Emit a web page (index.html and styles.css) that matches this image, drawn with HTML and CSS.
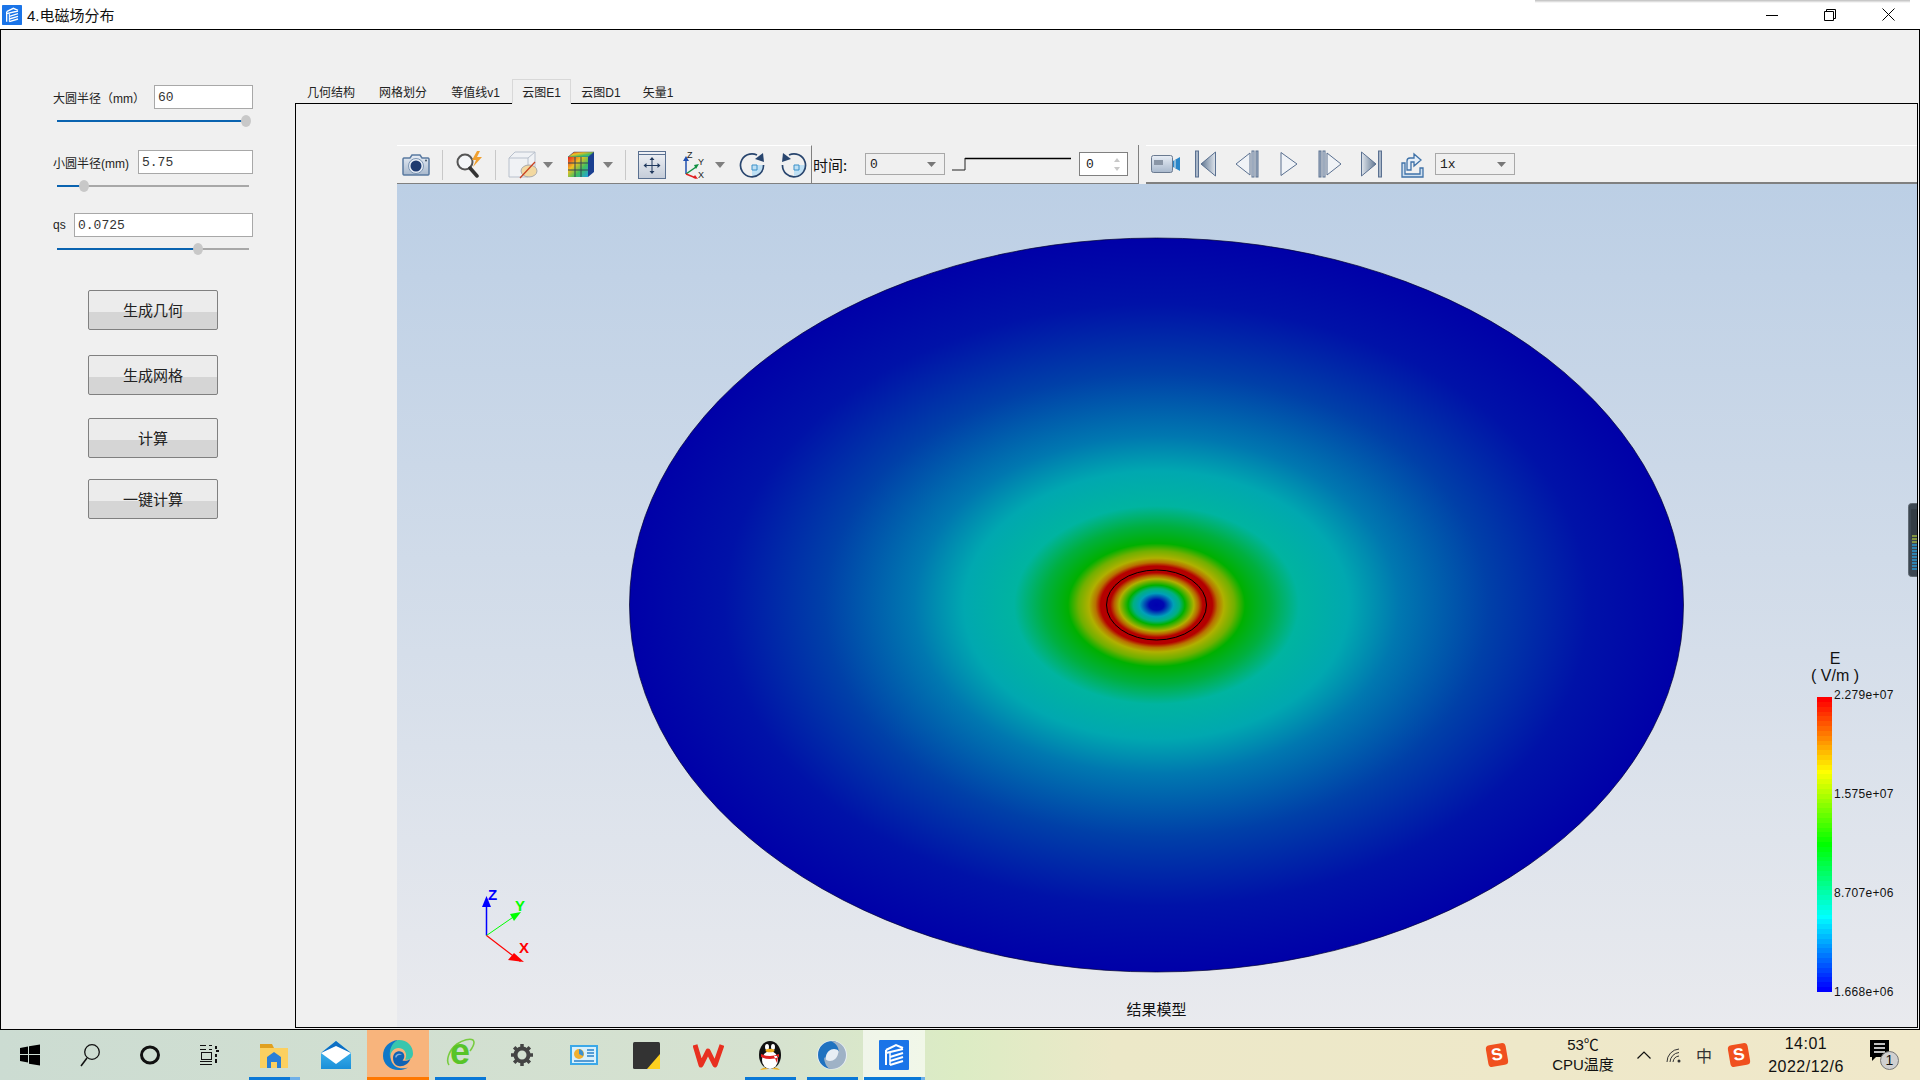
FILE: index.html
```html
<!DOCTYPE html>
<html lang="zh">
<head>
<meta charset="utf-8">
<title>4.电磁场分布</title>
<link rel="stylesheet" href="styles.css">
</head>
<body>
<svg class="defs" width="0" height="0">
  <defs>
    <symbol id="app" viewBox="0 0 30 30">
      <rect width="30" height="30" rx="1" fill="#1a74e8"/>
      <path d="M7 10 17 5l7 3M7 10v15M7 13 24 9M11 17l13-4M11 21l13-4M11 25l13-4" fill="none" stroke="#fff" stroke-width="2"/>
      <path d="M11 13v12" stroke="#fff" stroke-width="1.5"/>
    </symbol>
    <linearGradient id="steel" x1="0" y1="0" x2="0" y2="1"><stop offset="0" stop-color="#e8eef6"/><stop offset="1" stop-color="#a8b8cc"/></linearGradient>
    <linearGradient id="steelDark" x1="0" y1="0" x2="1" y2="0"><stop offset="0" stop-color="#5f7590"/><stop offset="1" stop-color="#dfe5ec"/></linearGradient>
    <linearGradient id="steelDarkR" x1="0" y1="0" x2="1" y2="0"><stop offset="0" stop-color="#dfe5ec"/><stop offset="1" stop-color="#5f7590"/></linearGradient>
    <linearGradient id="rainbow" x1="0" y1="0" x2="1" y2="1"><stop offset="0" stop-color="#e82020"/><stop offset=".35" stop-color="#f0c020"/><stop offset=".65" stop-color="#40c060"/><stop offset="1" stop-color="#20a0e0"/></linearGradient>
    <radialGradient id="field" cx=".5" cy=".5" r=".5">
      <stop offset="0" stop-color="#0000b0"/>
      <stop offset=".014" stop-color="#0008b0"/>
      <stop offset=".032" stop-color="#00a0b8"/>
      <stop offset=".044" stop-color="#00b080"/>
      <stop offset=".054" stop-color="#00b000"/>
      <stop offset=".071" stop-color="#b0b000"/>
      <stop offset=".08" stop-color="#b86000"/>
      <stop offset=".088" stop-color="#b40000"/>
      <stop offset=".106" stop-color="#b40000"/>
      <stop offset=".116" stop-color="#b87000"/>
      <stop offset=".128" stop-color="#b0b000"/>
      <stop offset=".148" stop-color="#70b000"/>
      <stop offset=".168" stop-color="#00b000"/>
      <stop offset=".215" stop-color="#00b040"/>
      <stop offset=".27" stop-color="#00b4a0"/>
      <stop offset=".365" stop-color="#00a8b0"/>
      <stop offset=".46" stop-color="#0078b0"/>
      <stop offset=".63" stop-color="#0040a8"/>
      <stop offset=".82" stop-color="#0012a8"/>
      <stop offset="1" stop-color="#0000a8"/>
    </radialGradient>
    <linearGradient id="mv" x1="0" y1="0" x2="0" y2="1"><stop offset="0" stop-color="#f0f2f6"/><stop offset="1" stop-color="#c4ccd8"/></linearGradient>
    <linearGradient id="tile" x1="0" y1="0" x2="0" y2="1"><stop offset="0" stop-color="#4fc3f7"/><stop offset="1" stop-color="#1a8fd8"/></linearGradient>
  </defs>
</svg>

<div class="screen">
  <header class="titlebar">
    <svg class="title-icon" width="20" height="20"><use href="#app"/></svg>
    <span class="title-text">4.电磁场分布</span>
    <div class="win-buttons">
      <svg width="12" height="12" viewBox="0 0 12 12"><path d="M0 6.500h12" stroke="#000"/></svg>
      <svg width="12" height="12" viewBox="0 0 12 12"><path d="M.5 2.500h9v9h-9zM2.500 2.500v-2h9v9h-2" fill="none" stroke="#000"/></svg>
      <svg width="13" height="13" viewBox="0 0 13 13"><path d="M.5.5l12 12M12.500.5l-12 12" stroke="#000"/></svg>
    </div>
  </header>

  <div class="window">
    <aside class="sidebar">
      <div class="field">
        <div class="row"><label class="lbl">大圆半径（mm）</label><div class="input w99">60</div></div>
        <div class="slider"><div class="fill v-a"></div><div class="thumb v-a"></div></div>
      </div>
      <div class="field">
        <div class="row"><label class="lbl">小圆半径(mm)</label><div class="input w115">5.75</div></div>
        <div class="slider"><div class="fill v-b"></div><div class="thumb v-b"></div></div>
      </div>
      <div class="field">
        <div class="row"><label class="lbl">qs</label><div class="input w179">0.0725</div></div>
        <div class="slider"><div class="fill v-c"></div><div class="thumb v-c"></div></div>
      </div>
      <div class="buttons">
        <button class="btn">生成几何</button>
        <button class="btn">生成网格</button>
        <button class="btn">计算</button>
        <button class="btn">一键计算</button>
      </div>
    </aside>

    <main class="main">
      <nav class="tabs">
        <span class="tab t72">几何结构</span>
        <span class="tab t72">网格划分</span>
        <span class="tab t73">等值线v1</span>
        <span class="tab t59 active">云图E1</span>
        <span class="tab t60">云图D1</span>
        <span class="tab t54">矢量1</span>
      </nav>
      <section class="pane">
        <div class="viewer">
          <div class="toolbars">
            <div class="tb tb-left">
              <svg class="ml5" width="28" height="24" viewBox="0 0 28 24"><path d="M2 5h6l2-3h8l2 3h6a1.500 1.500 0 0 1 1 1v15a1.500 1.500 0 0 1-1 1H2a1.500 1.500 0 0 1-1-1V6a1.500 1.500 0 0 1 1-1z" fill="url(#steel)" stroke="#5a7aa0" stroke-width="1.500"/><circle cx="14" cy="13" r="7.500" fill="#e8eef6" stroke="#7d96b4"/><circle cx="14" cy="13" r="5.500" fill="#1f3b70"/><circle cx="24" cy="7.500" r="1" fill="#456"/></svg>
              <i class="sep ml12"></i>
              <svg class="ml12" width="30" height="27" viewBox="0 0 30 27"><circle cx="10" cy="11" r="7.500" fill="#f4f6f8" stroke="#555" stroke-width="2"/><path d="M15 17l7 8" stroke="#333" stroke-width="3.500" stroke-linecap="round"/><path d="M22 0l-5 9h4l-3 7 9-10h-5l3-6z" fill="#f0a030"/></svg>
              <i class="sep ml10"></i>
              <svg class="ml12" width="30" height="28" viewBox="0 0 30 28"><path d="M1 7l6-6h20v17l-7 8H1z" fill="#f0f2f5" stroke="#b8c0cc"/><path d="M1 7h19v19M20 7l7-6" fill="none" stroke="#b8c0cc"/><ellipse cx="21" cy="20" rx="8" ry="6" fill="#f2d8a0" stroke="#aaa"/><path d="M12 27L27 11" stroke="#c84020" stroke-width="1.200"/></svg>
              <svg class="ml5 arrow" width="10" height="6" viewBox="0 0 10 6"><path d="M0 0h10L5 6z" fill="#7f7f7f"/></svg>
              <svg class="ml14" width="28" height="27" viewBox="0 0 28 27"><path d="M1 6l6-5h20v20l-6 5H1z" fill="#1a3f90"/><path d="M1 6l6-5h20l-6 5z" fill="url(#rainbow)" stroke="#456" stroke-width=".5"/><rect x="1" y="6" width="20" height="20" fill="url(#rainbow)"/><path d="M8 6v20M14 6v20M1 12h20M1 19h20" stroke="#345" stroke-width="1"/></svg>
              <svg class="ml8 arrow" width="10" height="6" viewBox="0 0 10 6"><path d="M0 0h10L5 6z" fill="#7f7f7f"/></svg>
              <i class="sep ml12"></i>
              <svg class="ml12" width="28" height="28" viewBox="0 0 28 28"><rect x=".500" y=".500" width="27" height="27" fill="url(#mv)" stroke="#5a7090"/><path d="M1 3.500h26" stroke="#5a7090"/><path d="M14 8v13M8 14.500h12" stroke="#223a5e"/><path d="M14 6l-2.500 3h5zM14 23l-2.500-3h5zM5.500 14.500l3-2.500v5zM22.500 14.500l-3-2.500v5z" fill="#223a5e"/></svg>
              <svg class="ml17" width="24" height="28" viewBox="0 0 24 28"><path d="M3 23V8" stroke="#2050b0" stroke-width="1.500"/><path d="M3 5l-3 5h6z" fill="#2050b0"/><path d="M3 23l10-7" stroke="#109040" stroke-width="1.500"/><path d="M16 13l-5 1 2 4z" fill="#109040"/><path d="M3 23l10 4" stroke="#e02020" stroke-width="1.500"/><path d="M15 28l-5-1 2-3z" fill="#e02020"/><text class="ax" x="4" y="7">Z</text><text class="ax" x="15" y="14">Y</text><text class="ax" x="15" y="27">X</text></svg>
              <svg class="ml8 arrow" width="10" height="6" viewBox="0 0 10 6"><path d="M0 0h10L5 6z" fill="#7f7f7f"/></svg>
              <svg class="ml14" width="26" height="26" viewBox="0 0 26 26"><path d="M13 13V24A11 11 0 0 0 24 13z" fill="#bfe0f4"/><path d="M13 13h5v5h-5z" fill="none" stroke="#3a90c8"/><path d="M18 3A11.500 11.500 0 1 0 24.500 13" fill="none" stroke="#28456e" stroke-width="1.700"/><path d="M24 1l1 9-9-3z" fill="#28456e"/></svg>
              <svg class="ml16" width="26" height="26" viewBox="0 0 26 26"><path d="M13 13V24A11 11 0 0 0 24 13z" fill="#bfe0f4"/><path d="M13 13h5v5h-5z" fill="none" stroke="#3a90c8"/><path d="M8 3a11.500 11.500 0 1 1-6.500 10" fill="none" stroke="#28456e" stroke-width="1.700"/><path d="M2 1l-1 9 9-3z" fill="#28456e"/></svg>
            </div>
            <div class="tb tb-mid">
              <span class="time-lbl">时间:</span>
              <div class="combo w80 ml15"><span>0</span><svg width="9" height="5" viewBox="0 0 9 5"><path d="M0 0h9L4.500 5z" fill="#777"/></svg></div>
              <svg class="ml7" width="120" height="14" viewBox="0 0 120 14"><path d="M13 1.500h106" stroke="#000" stroke-width="1.500"/><path d="M13 1v12H0" fill="none" stroke="#222"/></svg>
              <div class="spin ml7"><span>0</span><svg width="6" height="13" viewBox="0 0 6 13"><path d="M0 4h6L3 0zM0 9h6l-3 4z" fill="#c8c8c8"/></svg></div>
            </div>
            <div class="tb-gap"></div>
            <div class="tb tb-right">
              <svg class="ml5" width="30" height="18" viewBox="0 0 30 18"><rect x=".500" y=".500" width="21" height="17" rx="2" fill="url(#steel)" stroke="#6a7a90"/><rect x="3" y="5" width="9" height="5" fill="#8a96a6"/><path d="M22 6l7-4v14l-7-4z" fill="#2a86c8"/><path d="M24 5v8" stroke="#eee"/></svg>
              <svg class="ml14" width="21" height="28" viewBox="0 0 21 28"><rect x=".500" y="1" width="3" height="26" fill="#a8b6c8" stroke="#5a7090"/><path d="M20.500 2v24L6 14z" fill="url(#steelDark)" stroke="#5a7090"/></svg>
              <svg class="ml19" width="24" height="28" viewBox="0 0 24 28"><path d="M15 3v22L1 14z" fill="#f0f3f7" stroke="#5a7090"/><rect x="17" y="1" width="2" height="26" fill="#dfe5ec" stroke="#5a7090"/><rect x="21" y="1" width="2" height="26" fill="#a8b6c8" stroke="#5a7090"/></svg>
              <svg class="ml21" width="18" height="26" viewBox="0 0 18 26"><path d="M1 1.500v23L17 13z" fill="#f0f3f7" stroke="#5a7090"/></svg>
              <svg class="ml20" width="24" height="28" viewBox="0 0 24 28"><rect x="1" y="1" width="2" height="26" fill="#a8b6c8" stroke="#5a7090"/><rect x="5" y="1" width="2" height="26" fill="#dfe5ec" stroke="#5a7090"/><path d="M9 3v22L23 14z" fill="#f0f3f7" stroke="#5a7090"/></svg>
              <svg class="ml19" width="21" height="28" viewBox="0 0 21 28"><path d="M.5 2v24L15 14z" fill="url(#steelDarkR)" stroke="#5a7090"/><rect x="17.500" y="1" width="3" height="26" fill="#a8b6c8" stroke="#5a7090"/></svg>
              <svg class="ml18" width="24" height="28" viewBox="0 0 24 28"><path d="M2 13h3v11h15v-6h3v9H2z" fill="#cfe0f0" stroke="#3f72a8" stroke-width="1.300"/><path d="M7 20V11c0-2 1-3 3-3h4V4l7 6-7 6v-4h-3v8z" fill="#e4eef8" stroke="#3f72a8" stroke-width="1.300"/></svg>
              <div class="combo w80 ml11"><span>1x</span><svg width="9" height="5" viewBox="0 0 9 5"><path d="M0 0h9L4.500 5z" fill="#777"/></svg></div>
            </div>
          </div>
          <div class="canvas">
            <svg class="scene" width="1520" height="843" viewBox="0 0 1520 843">
              <ellipse cx="759.500" cy="421" rx="527" ry="367" fill="url(#field)" stroke="#000030" stroke-width=".7"/>
              <ellipse cx="759.500" cy="421" rx="50" ry="35" fill="none" stroke="#000" stroke-width="1"/>
              <path d="M89.500 751.500V716" stroke="#0000ff" stroke-width="1.500"/>
              <path d="M89.500 712l-4.500 11h9z" fill="#0000ff"/>
              <path d="M89.500 751.500l29-20" stroke="#00ff00" stroke-width="1"/>
              <path d="M124 728l-11 2 4 7z" fill="#00ff00"/>
              <path d="M89.500 751.500l34 26" stroke="#ff0000" stroke-width="1.200"/>
              <path d="M127 778l-10-9-6 7z" fill="#ff0000"/>
              <text class="axis z" x="91" y="716">Z</text>
              <text class="axis y" x="118" y="727">Y</text>
              <text class="axis x" x="122" y="769">X</text>
            </svg>
            <div class="legend">
              <div class="legend-title">E<br>( V/m )</div>
              <div class="legend-body">
                <div class="legend-bar"></div>
                <div class="legend-labels"><span>2.279e+07</span><span>1.575e+07</span><span>8.707e+06</span><span>1.668e+06</span></div>
              </div>
            </div>
            <div class="caption">结果模型</div>
            <svg class="widget" width="9" height="74" viewBox="0 0 9 74"><rect x=".500" y=".500" width="14" height="73" rx="3" fill="#3c4752" stroke="#606a74"/><rect x="3" y="6" width="6" height="30" fill="#333c45"/><path d="M4 33h5M4 36h5M4 39h5" stroke="#9ab040" stroke-width="1.500"/><path d="M4 42h5M4 45h5M4 48h5M4 51h5M4 54h5M4 57h5M4 60h5M4 63h5M4 66h5" stroke="#2a98d0" stroke-width="1.500"/></svg>
          </div>
        </div>
      </section>
    </main>
  </div>

  <footer class="taskbar">
    <div class="sys t60">
      <svg width="22" height="22" viewBox="0 0 22 22"><path d="M1 4l8-1.500V10H1zM10 2.300L21 .5V10H10zM1 11h8v7.500L1 17zM10 11h11v10.500L10 19.700z" fill="#000"/></svg>
    </div>
    <div class="sys t60">
      <svg width="22" height="24" viewBox="0 0 22 24"><circle cx="13" cy="9" r="7.300" fill="none" stroke="#111" stroke-width="1.300"/><path d="M8 15L2 23" stroke="#111" stroke-width="1.500"/></svg>
    </div>
    <div class="sys t60">
      <svg width="22" height="22" viewBox="0 0 22 22"><ellipse cx="11" cy="11" rx="8.500" ry="8" fill="none" stroke="#111" stroke-width="3"/></svg>
    </div>
    <div class="sys t60 sp3">
      <svg width="20" height="20" viewBox="0 0 20 20"><path d="M0 .5h6M9 .5h3M0 4.500h6M9 4.500h3M0 19.500h12M0 16.500h12" stroke="#111"/><rect x="1.500" y="7.500" width="10" height="7" fill="none" stroke="#111"/><path d="M16 1v3M16 6h3M16 9v3M16 14v4" stroke="#111" stroke-width="2"/></svg>
    </div>

    <div class="tile run run-stack">
      <svg width="28" height="26" viewBox="0 0 28 26"><path d="M0 2h12l2 4H0z" fill="#e0a020"/><path d="M0 6h28v20H0z" fill="#fcd060"/><path d="M7 26V15l7-5 7 5v11h-4v-6h-6v6z" fill="#2a7fd8"/></svg>
    </div>
    <div class="tile">
      <svg width="30" height="28" viewBox="0 0 30 28"><path d="M0 12L15 0l15 12v16H0z" fill="url(#tile)"/><path d="M0 12l15 11 15-11L15 3z" fill="#fff"/><path d="M0 12L15 0l15 12-15-7z" fill="#0d6fc4"/></svg>
    </div>
    <div class="tile edge">
      <svg width="32" height="32" viewBox="0 0 32 32"><path fill="#0f78c8" d="M1 17C1 8 7 2 16 1 9 5 7 14 9 21c2 7 9 10 17 7.500C23 30.500 20 31 16.500 31 8 31 1 25 1 17z"/><path fill="#38c6ae" d="M16 1c9-.5 15 6 15 13.500 0 5-4 7-8 6 2-3 1.500-8-2.500-10.500C14 7 9 11 8 18 7 10 10 4 16 1z"/><path fill="#1163b4" d="M11 19c0-5 5-8 9-6 3 2 3 6 .5 8.500 2 .5 5 .5 8-1.500-2 5-7 8-12 7-3-.5-5.500-3.500-5.500-8z"/><path fill="#fff" opacity=".5" d="M14 19c1-3 4-4 6-3-1-1.500-4-2-6 0-1 1-1 2 0 3z"/></svg>
    </div>
    <div class="tile run">
      <svg width="30" height="48" viewBox="0 0 30 48"><path d="M4 34C1 30 3 20 12 13c6-4 13-6 16-4 2 2 0 7-3 11" fill="none" stroke="#78cc40" stroke-width="1.600"/><text class="ie" x="15" y="33" text-anchor="middle">e</text></svg>
    </div>
    <div class="tile">
      <svg width="24" height="24" viewBox="0 0 24 24"><circle cx="12" cy="12" r="6.500" fill="none" stroke="#444" stroke-width="4"/><path d="M12 1v5M12 18v5M1 12h5M18 12h5M4.200 4.200l3.500 3.500M16.300 16.300l3.500 3.500M4.200 19.800l3.500-3.500M16.300 7.700l3.500-3.500" stroke="#444" stroke-width="3.500"/></svg>
    </div>
    <div class="tile">
      <svg width="28" height="20" viewBox="0 0 28 20"><rect width="28" height="20" fill="#3ba8e8"/><rect x="2" y="2" width="24" height="16" fill="#d8f0fc"/><circle cx="9" cy="9" r="5" fill="#f0b030"/><path d="M9 9V4a5 5 0 0 1 4 7z" fill="#3a90d0"/><path d="M17 5h7M17 8h7M17 11h7M4 16h20" stroke="#2a80c8" stroke-width="1.500"/></svg>
    </div>
    <div class="tile">
      <svg width="27" height="27" viewBox="0 0 27 27"><rect width="27" height="27" rx="1.500" fill="#333"/><path d="M27 12v15H14z" fill="#fcd020"/></svg>
    </div>
    <div class="tile">
      <svg width="31" height="26" viewBox="0 0 31 26"><path d="M2 3l6 20 7-14 7 14 7-20" fill="none" stroke="#e83020" stroke-width="5" stroke-linejoin="round"/></svg>
    </div>
    <div class="tile run">
      <svg width="26" height="30" viewBox="0 0 26 30"><ellipse cx="13" cy="15" rx="11" ry="14" fill="#111"/><ellipse cx="13" cy="20" rx="8" ry="9" fill="#fff"/><ellipse cx="10" cy="7" rx="2" ry="3" fill="#fff"/><ellipse cx="16" cy="7" rx="2" ry="3" fill="#fff"/><ellipse cx="13" cy="10.500" rx="4.500" ry="1.800" fill="#f0b020"/><path d="M4 14q9 4 18 0v3q-9 4-18 0zM17 16l3 7 1-7z" fill="#e02020"/><path d="M3 30q4-4 8-1zM23 30q-4-4-8-1z" fill="#f0b020"/></svg>
    </div>
    <div class="tile run">
      <svg width="32" height="30" viewBox="0 0 32 30"><ellipse cx="16" cy="15" rx="15" ry="14.500" fill="#e8eef4"/><path d="M17 1C8 1 2 7 2 15s6 14 15 14c-6-3-9-8-7-13 1-4 4-7 8-7 4 0 6 3 6 6 3-5-1-14-7-14z" fill="#1f72c0"/><path d="M15 29c9 0 15-6 15-14S24 1 15 1c6 3 9 8 7 13-1 4-4 7-8 7-3 0-5-2-6-4 0 5 3 12 7 12z" fill="#9fb2c6"/></svg>
    </div>
    <div class="tile run run-stack active-app">
      <svg width="30" height="30"><use href="#app"/></svg>
    </div>

    <div class="tray">
      <div class="sogou">S</div>
      <div class="cpu ml40"><span>53℃</span><span>CPU温度</span></div>
      <svg class="ml18" width="14" height="8" viewBox="0 0 14 8"><path d="M.5 7.500L7 1l6.500 6.500" fill="none" stroke="#111" stroke-width="1.200"/></svg>
      <svg class="ml15" width="16" height="16" viewBox="0 0 16 16"><path d="M1 15A13 13 0 0 1 13 2M4 15A10 10 0 0 1 13 5.500M7 15A7 7 0 0 1 13 9" fill="none" stroke="#333"/><circle cx="13" cy="14" r="1.500" fill="#333"/></svg>
      <span class="ime ml14">中</span>
      <div class="sogou ml17">S</div>
      <div class="clock ml17"><span>14:01</span><span>2022/12/6</span></div>
      <div class="notify ml24">
        <svg width="20" height="22" viewBox="0 0 20 22"><path d="M0 0h19v17H6l-4 4v-4H0z" fill="#000"/><path d="M4 4h11M4 8h11M4 12h11" stroke="#fff" stroke-width="1.300"/></svg>
        <span class="badge">1</span>
      </div>
    </div>
  </footer>
</div>
</body>
</html>
```

FILE: styles.css
```css
* { box-sizing: border-box; }
html, body { margin: 0; padding: 0; }
body { font-family: "Liberation Sans", "Noto Sans CJK SC", sans-serif; color: #111; overflow: hidden; }
.defs { position: absolute; }
.screen { width: 1920px; height: 1080px; display: flex; flex-direction: column; overflow: hidden; background: #fff; }

/* title bar */
.titlebar { height: 29px; background: #fff; display: flex; align-items: center; position: relative; flex: none; }
.titlebar::before { content: ""; position: absolute; left: 1535px; top: 0; width: 375px; height: 3px; background: linear-gradient(#bdbdbd, #fff); }
.title-icon { margin-left: 2px; }
.title-text { margin-left: 5px; font-size: 15px; }
.win-buttons { margin-left: auto; margin-right: 25px; display: flex; align-items: center; gap: 46px; }

/* window */
.window { height: 1001px; flex: none; border: 1px solid #000; background: #f0f0f0; display: flex; }
.sidebar { width: 294px; flex: none; padding: 55px 0 0 52px; }
.field { width: 200px; padding-bottom: 23px; }
.field:nth-child(2) { padding-bottom: 21px; }
.field:nth-child(3) { padding-bottom: 35px; }
.row { display: flex; justify-content: space-between; align-items: center; height: 24px; }
.lbl { font-size: 12px; color: #222; }
.input { height: 24px; background: #fff; border: 1px solid #a8a8a8; font: 13px/24px "Liberation Mono", monospace; padding-left: 3px; color: #333; }
.w99 { width: 99px; } .w115 { width: 115px; } .w179 { width: 179px; }
.slider { position: relative; height: 2px; margin: 11px 0 5px 4px; width: 192px; background: #a8a8a8; }
.fill { position: absolute; left: 0; top: 0; height: 2px; background: #0a63b0; }
.thumb { position: absolute; top: -5px; width: 10px; height: 12px; border-radius: 50%; background: #c8c8c8; }
.fill.v-a { width: 189px; } .thumb.v-a { left: 184px; }
.fill.v-b { width: 27px; } .thumb.v-b { left: 22px; }
.fill.v-c { width: 141px; } .thumb.v-c { left: 136px; }
.buttons { display: flex; flex-direction: column; margin-left: 35px; }
.btn { width: 130px; height: 40px; padding: 0 0 2px; border: 1px solid #808080; border-radius: 2px; font: 15px "Noto Sans CJK SC", sans-serif; color: #222; background: linear-gradient(#ececec 0 21px, #d5d5d5 21px); }
.btn:nth-child(1) { margin-bottom: 25px; }
.btn:nth-child(2) { margin-bottom: 23px; }
.btn:nth-child(3) { margin-bottom: 21px; }

/* tabs + pane */
.main { flex: 1; min-width: 0; display: flex; flex-direction: column; padding: 49px 1px 1px 0; }
.tabs { display: flex; height: 24px; flex: none; position: relative; z-index: 1; }
.tab { font-size: 12px; color: #222; display: flex; align-items: center; justify-content: center; height: 24px; }
.t72 { width: 72px; } .t73 { width: 73px; } .t59 { width: 59px; } .t60 { width: 60px; } .t54 { width: 54px; }
.tab.active { height: 25px; background: #f0f0f0; border: 1px solid #d8d8d8; border-bottom-color: #f0f0f0; padding-bottom: 1px; }
.pane { flex: 1; min-height: 0; border: 1px solid #000; padding: 41px 0 0 101px; }
.viewer { height: 100%; display: flex; flex-direction: column; }

/* toolbars */
.toolbars { height: 39px; flex: none; display: flex; }
.tb { display: flex; align-items: center; height: 39px; border-bottom: 1px solid #808080; }
.tb-left, .tb-right { border-top: 1px solid #fff; }
.tb-left { width: 415px; border-right: 1px solid #808080; }
.tb-mid { width: 327px; border-right: 1px solid #808080; }
.tb-gap { width: 7px; }
.tb-right { flex: 1; border-bottom-width: 2px; }
.sep { width: 1px; height: 30px; background: #c8c8c8; }
.ml5 { margin-left: 5px; } .ml7 { margin-left: 7px; } .ml8 { margin-left: 8px; } .ml10 { margin-left: 10px; } .ml11 { margin-left: 11px; }
.ml12 { margin-left: 12px; } .ml14 { margin-left: 14px; } .ml15 { margin-left: 15px; } .ml16 { margin-left: 16px; } .ml17 { margin-left: 17px; }
.ml18 { margin-left: 18px; } .ml19 { margin-left: 19px; } .ml20 { margin-left: 20px; } .ml21 { margin-left: 21px; } .ml24 { margin-left: 24px; } .ml40 { margin-left: 40px; }
.arrow { flex: none; }
.ax { font: 9px "Liberation Sans", sans-serif; fill: #222; }
.time-lbl { font: 15px "Noto Sans CJK SC", sans-serif; margin-left: 1px; width: 37px; color: #111; }
.combo { height: 22px; border: 1px solid #a8a8a8; display: flex; align-items: center; justify-content: space-between; padding: 0 8px 0 4px; font: 13px "Liberation Mono", monospace; color: #222; }
.w80 { width: 80px; }
.spin { width: 49px; height: 24px; background: #fff; border: 1px solid #808080; display: flex; align-items: center; justify-content: space-between; padding: 0 7px 0 6px; font: 13px "Liberation Mono", monospace; color: #222; }

/* canvas */
.canvas { flex: 1; min-height: 0; position: relative; background: linear-gradient(#bccfe5, #e9eaee); overflow: hidden; }
.scene { position: absolute; left: 0; top: 0; display: block; }
.axis { font: bold 15px "Liberation Sans", sans-serif; }
.axis.z { fill: #0000ff; } .axis.y { fill: #00ff00; } .axis.x { fill: #ff0000; }
.legend { position: absolute; left: 1405px; top: 466px; width: 100px; }
.legend-title { font-size: 16px; line-height: 17px; text-align: center; width: 60px; margin-left: 3px; color: #111; }
.legend-body { display: flex; margin: 13px 0 0 15px; position: relative; }
.legend-bar { width: 15px; height: 295px; background: linear-gradient(#f00 0 1.64%,#f10 0 3.28%,#f20 0 4.92%,#f30 0 6.56%,#f40 0 8.2%,#f50 0 9.84%,#f60 0 11.48%,#f70 0 13.11%,#f80 0 14.75%,#f90 0 16.39%,#fa0 0 18.03%,#fb0 0 19.67%,#fc0 0 21.31%,#fd0 0 22.95%,#fe0 0 24.59%,#ff0 0 26.23%,#ef0 0 27.87%,#df0 0 29.51%,#cf0 0 31.15%,#bf0 0 32.79%,#af0 0 34.43%,#9f0 0 36.07%,#8f0 0 37.7%,#7f0 0 39.34%,#6f0 0 40.98%,#5f0 0 42.62%,#4f0 0 44.26%,#3f0 0 45.9%,#2f0 0 47.54%,#1f0 0 49.18%,#0f0 0 50.82%,#0f1 0 52.46%,#0f2 0 54.1%,#0f3 0 55.74%,#0f4 0 57.38%,#0f5 0 59.02%,#0f6 0 60.66%,#0f7 0 62.3%,#0f8 0 63.93%,#0f9 0 65.57%,#0fa 0 67.21%,#0fb 0 68.85%,#0fc 0 70.49%,#0fd 0 72.13%,#0fe 0 73.77%,#0ff 0 75.41%,#0ef 0 77.05%,#0df 0 78.69%,#0cf 0 80.33%,#0bf 0 81.97%,#0af 0 83.61%,#09f 0 85.25%,#08f 0 86.89%,#07f 0 88.52%,#06f 0 90.16%,#05f 0 91.8%,#04f 0 93.44%,#03f 0 95.08%,#02f 0 96.72%,#01f 0 98.36%,#00f 0 100%); }
.legend-labels { height: 311px; margin: -9px 0 0 2px; display: flex; flex-direction: column; justify-content: space-between; font-size: 12px; line-height: 14px; letter-spacing: .3px; color: #111; white-space: nowrap; }
.caption { position: absolute; left: 0; bottom: 8px; text-align: center; width: 1519px; font: 15px "Noto Sans CJK SC", sans-serif; color: #111; }
.widget { position: absolute; right: 0; top: 319px; }

/* taskbar */
.taskbar { height: 50px; flex: none; display: flex; background: linear-gradient(90deg, #ccdcd2 0, #d6e2d0 40%, #dcecc4 50%, #ece8c8 58%, #f0e8ca 100%); }
.sys { display: flex; align-items: center; justify-content: center; height: 50px; }
.sp3 { margin-right: 3px; }
.tile { width: 62px; height: 50px; display: flex; align-items: center; justify-content: center; position: relative; }
.tile.run::after { content: ""; position: absolute; left: 6px; bottom: 0; width: 51px; height: 3px; background: #0a78d7; }
.tile.run-stack::after { width: 41px; box-shadow: 10px 0 0 #70b0e8; }
.tile.edge { background: #f8b47c; }
.tile.edge::after { content: ""; position: absolute; left: 0; right: 0; bottom: 0; height: 3px; background: #ff7800; }
.tile.active-app { background: rgba(255, 255, 255, .6); }
.tile.active-app::after { left: 1px; width: 57px; box-shadow: 4px 0 0 #70b0e8; }
.ie { font: bold 36px "Liberation Sans", sans-serif; fill: #58c428; }
.tray { margin-left: auto; padding-right: 24px; display: flex; align-items: center; height: 50px; }
.sogou { width: 20px; height: 22px; border-radius: 4px; background: #f0501e; color: #fff; font: bold 17px/22px "Liberation Sans", sans-serif; text-align: center; transform: rotate(-10deg); }
.cpu, .clock { display: flex; flex-direction: column; align-items: center; line-height: 20px; font-size: 15px; color: #111; }
.cpu { width: 72px; }
.clock { width: 80px; font-size: 16px; line-height: 23px; letter-spacing: .5px; }
.ime { font: 16px "Noto Sans CJK SC", sans-serif; color: #333; }
.notify { position: relative; width: 26px; height: 30px; }
.badge { position: absolute; left: 10px; top: 11px; width: 19px; height: 19px; border-radius: 50%; background: #d0d0d0; border: 1px solid #777; font-size: 14px; line-height: 17px; text-align: center; color: #111; }
```
